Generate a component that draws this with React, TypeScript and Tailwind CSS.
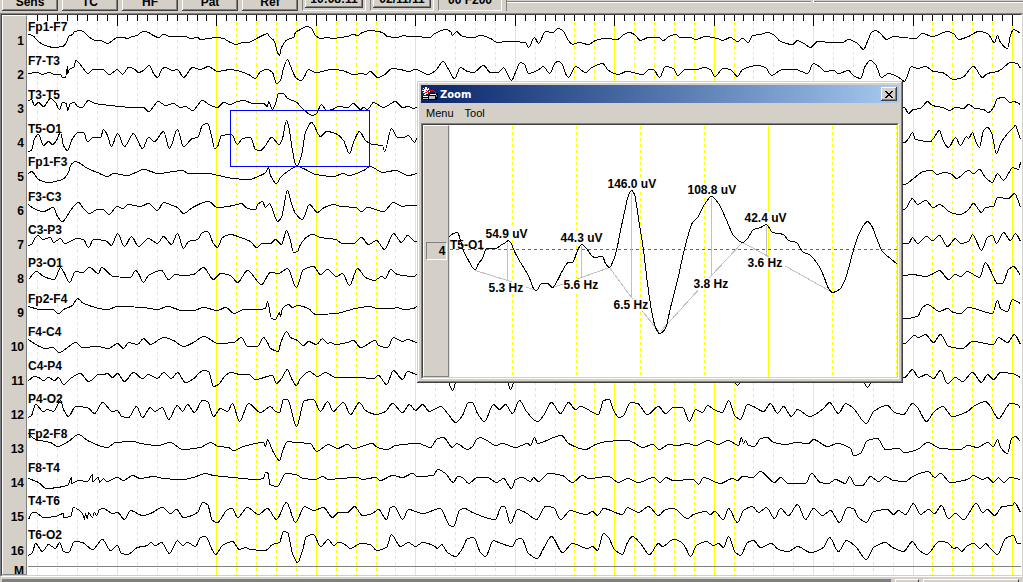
import React from "react";

type Channel = { label: string; y: number; points: string };

const CHANNELS: Channel[] = [
  {
    label: "Fp1-F7",
    y: 31,
    points:
      "28,34 32,35 37,40 42,44 48,46 53,47 62,46 66,42 68,36 72,34 74,31 80,30 84,32 88,36 95,40 100,40 107,43 112,40 117,37 123,37 127,38 132,36 137,35 140,32 144,31 148,32 153,35 158,37 163,34 170,36 185,36 190,38 197,37 200,39 208,38 216,37 223,38 228,41 236,44 242,42 247,42 258,37 262,35 267,33 269,36 274,41 277,52 279,55 281,47 287,39 293,37 295,32 300,29 306,26 310,27 315,35 320,38 327,37 332,38 340,37 347,36 353,34 357,35 362,32 370,30 377,31 382,32 387,36 397,37 403,35 408,36 413,36 430,37 433,34 445,29 450,31 452,35 456,31 462,36 473,37 480,35 490,38 497,42 507,41 525,42 528,47 534,37 538,43 545,31 552,32 558,28 563,31 568,40 572,44 578,42 588,44 595,40 605,38 617,39 623,34 629,32 634,34 640,40 648,37 658,37 663,40 668,36 675,34 680,37 690,37 695,39 705,36 717,38 722,40 730,37 737,41 742,38 748,42 752,35 760,34 767,32 773,34 780,41 792,44 797,40 805,44 810,47 817,41 832,42 842,42 848,39 857,43 863,49 867,41 871,32 875,30 880,33 886,39 893,36 903,37 915,38 922,33 932,36 947,31 953,33 958,39 968,36 978,31 987,33 994,42 997,35 1000,42 1007,48 1010,35 1013,29 1020,33",
  },
  {
    label: "F7-T3",
    y: 65,
    points:
      "28,73 37,72 42,74 48,72 55,74 60,74 62,77 65,77 67,66 67,73 69,69 74,66 75,60 78,62 82,67 86,72 87,73 93,69 102,69 109,74 117,69 122,74 128,67 133,68 138,72 143,70 149,65 153,73 157,77 162,68 165,67 172,70 177,69 183,77 192,67 200,69 208,66 217,71 230,69 240,71 248,74 255,78 260,71 267,69 272,72 276,83 280,80 283,68 287,59 289,63 293,73 296,78 301,80 304,76 308,69 315,72 332,69 342,70 353,74 362,73 365,74 370,71 377,77 383,75 392,68 400,69 408,71 415,69 428,74 435,70 443,61 448,69 454,78 460,67 467,71 473,72 483,65 490,72 498,72 503,67 511,80 515,72 520,62 524,64 528,73 537,70 543,66 549,73 555,62 558,61 562,64 565,73 568,77 575,66 585,72 590,68 602,63 608,70 618,74 626,71 643,74 648,69 653,69 659,77 665,66 673,68 677,75 685,69 697,69 703,67 710,69 714,76 723,68 730,69 737,76 742,69 757,65 765,67 771,75 782,69 795,69 807,73 813,63 820,67 825,71 833,70 838,73 848,70 853,75 860,78 865,65 870,60 875,64 881,77 888,73 900,78 904,81 911,66 917,68 925,66 933,71 942,72 953,79 962,77 973,66 982,77 987,73 997,71 1002,68 1010,62 1017,63 1020,68",
  },
  {
    label: "T3-T5",
    y: 99,
    points:
      "28,100 31,99 34,105 38,102 43,106 50,98 55,102 59,109 62,102 66,103 67,110 70,103 74,102 77,106 82,107 85,103 88,100 95,103 110,105 133,107 143,107 148,111 158,101 165,105 173,103 180,107 185,106 192,110 202,100 210,105 217,107 223,102 230,104 237,101 243,100 253,103 263,103 267,106 268,101 272,109 275,103 278,93 283,93 287,98 295,101 303,109 312,115 316,113 321,104 326,110 332,109 338,106 347,107 353,103 360,109 363,107 367,109 373,102 383,107 395,101 402,107 408,106 413,108 418,106 904,107 908,113 913,109 920,108 927,101 932,105 942,107 949,110 955,107 963,108 968,104 975,108 983,109 988,112 993,107 997,98 1003,97 1010,102 1013,101 1020,104",
  },
  {
    label: "T5-O1",
    y: 133,
    points:
      "28,151 31,150 34,138 38,134 43,145 48,141 52,144 56,140 60,132 63,145 67,150 72,138 78,132 83,132 87,141 93,137 100,137 103,129 107,135 111,146 117,133 124,146 133,133 142,148 148,137 154,141 163,131 169,148 177,129 183,146 192,138 197,137 202,125 207,123 211,135 214,148 217,146 221,135 231,134 237,144 242,138 250,137 255,149 260,150 265,145 271,137 279,144 282,138 286,120 288,125 292,150 295,164 297,165 301,155 305,132 311,122 320,136 326,131 335,133 343,140 349,153 353,142 359,131 365,140 372,144 382,145 384,151 391,128 397,137 403,137 408,135 414,142 418,135 904,142 908,138 912,132 915,139 930,141 933,138 939,130 943,141 948,147 955,137 960,145 966,136 968,138 972,132 975,140 979,147 983,130 987,127 991,132 996,153 1000,143 1007,133 1012,128 1015,125 1018,133 1020,139",
  },
  {
    label: "Fp1-F3",
    y: 166,
    points:
      "28,173 31,171 38,179 47,182 62,179 68,172 70,165 75,161 78,162 87,168 97,172 107,176 113,173 127,175 133,173 143,169 158,173 182,170 188,173 207,173 218,175 233,178 248,179 260,175 265,172 268,167 270,175 276,183 280,177 287,171 297,166 303,168 315,174 333,176 343,173 348,175 363,170 370,166 382,172 395,170 408,175 418,173 904,184 913,178 923,171 931,170 937,174 943,172 950,173 956,178 968,170 973,173 979,169 985,177 992,182 997,173 1003,180 1008,173 1012,167 1018,169 1020,162",
  },
  {
    label: "F3-C3",
    y: 201,
    points:
      "28,204 33,208 43,211 53,207 57,216 62,221 70,210 78,202 83,208 89,213 97,209 103,209 108,214 117,206 122,208 128,204 140,206 148,203 157,210 163,202 172,205 177,207 183,213 192,207 208,201 217,207 233,205 241,203 247,208 255,209 257,204 262,201 265,207 269,203 273,212 277,221 281,217 287,190 291,203 295,213 302,219 309,204 317,212 322,208 333,204 340,206 355,207 361,211 367,207 383,211 393,202 402,206 407,205 417,205 904,209 912,198 917,204 925,200 933,207 939,204 950,212 960,214 968,209 973,203 981,212 985,207 993,206 997,197 1008,198 1014,193 1020,207",
  },
  {
    label: "C3-P3",
    y: 234,
    points:
      "28,245 31,244 35,237 38,235 42,239 50,237 53,242 60,238 64,243 77,238 83,239 88,247 93,239 105,240 111,245 117,233 124,246 131,236 138,246 148,238 157,243 163,236 171,244 177,233 183,248 188,241 197,239 202,232 207,231 213,243 217,247 222,237 230,234 240,237 250,241 256,247 262,243 270,243 275,239 281,244 286,230 290,240 293,252 297,251 300,244 307,236 312,234 320,237 335,239 342,243 353,243 361,237 368,244 376,240 384,249 393,233 401,242 407,235 415,241 904,243 908,243 912,237 917,243 926,236 932,240 939,235 947,246 955,238 960,243 968,241 972,234 977,243 981,250 987,237 992,235 996,243 1003,232 1010,240 1015,233 1020,241",
  },
  {
    label: "P3-O1",
    y: 267,
    points:
      "28,279 36,271 43,276 54,279 60,267 64,273 69,282 75,271 82,272 89,267 98,273 101,267 113,276 130,277 135,270 138,273 143,282 148,275 161,270 168,279 175,274 182,275 193,274 203,267 213,279 220,273 230,275 237,282 247,270 261,284 270,272 278,273 287,268 296,287 303,269 313,266 320,274 327,269 336,276 342,273 349,285 357,268 365,277 374,280 381,276 385,278 390,269 397,274 414,276 417,273 904,275 912,274 925,276 931,274 939,270 948,279 955,274 960,276 967,271 979,277 985,262 990,270 997,283 1002,283 1008,269 1013,266 1020,275",
  },
  {
    label: "Fp2-F4",
    y: 303,
    points:
      "28,306 40,309 52,309 58,313 63,309 72,305 77,298 83,303 107,309 117,306 143,307 157,309 167,306 182,310 193,310 203,307 217,310 225,307 234,313 243,309 257,309 265,308 267,301 271,318 275,319 279,312 280,316 282,308 288,304 292,307 297,305 308,308 315,314 335,313 355,308 369,306 377,308 392,308 397,307 403,309 413,308 417,306 904,318 917,316 922,307 927,304 939,311 947,308 953,312 960,313 968,307 992,313 997,300 1000,308 1007,311 1012,299 1020,303",
  },
  {
    label: "F4-C4",
    y: 336,
    points:
      "28,339 37,345 45,348 52,347 59,352 67,347 75,342 82,347 97,346 108,348 117,343 123,348 128,342 137,344 143,338 150,344 163,337 173,340 183,346 193,342 203,336 218,343 233,342 241,337 247,346 257,346 263,337 267,342 270,348 278,351 280,343 286,331 290,337 297,340 303,345 308,341 316,344 322,338 327,343 330,342 335,344 347,342 353,340 360,347 375,340 378,345 387,347 393,337 402,341 407,339 417,342 904,343 914,335 918,337 925,334 933,342 940,334 948,346 962,348 972,341 993,344 998,337 1007,342 1014,334 1020,344",
  },
  {
    label: "C4-P4",
    y: 370,
    points:
      "28,380 34,376 38,377 43,380 48,377 54,380 58,377 63,384 70,378 80,373 88,381 92,379 98,374 103,374 107,373 112,377 117,373 124,381 133,372 142,378 148,374 157,378 163,372 171,378 177,372 185,382 192,379 203,370 208,371 213,386 218,384 224,376 230,372 240,374 248,374 255,379 272,375 276,383 281,378 287,369 291,378 296,385 300,378 309,371 317,376 325,372 335,377 357,377 373,378 378,375 386,384 393,370 402,379 407,371 417,374 445,374 452,390 458,374 505,374 510,389 516,374 730,374 737,385 743,374 860,374 867,387 875,374 904,377 912,369 918,377 926,374 933,378 940,370 947,383 955,377 962,381 972,372 981,382 987,374 993,379 1000,372 1012,373 1020,377",
  },
  {
    label: "P4-O2",
    y: 403,
    points:
      "28,417 31,415 35,404 43,411 47,409 53,411 60,400 63,409 68,416 75,406 87,407 94,413 102,402 112,411 117,410 121,416 128,417 136,406 142,417 150,407 154,411 162,407 168,419 177,405 182,411 187,404 194,412 202,400 207,401 213,416 220,408 227,411 232,403 239,421 248,403 260,412 270,406 275,411 279,412 283,399 287,399 296,426 304,400 313,399 320,411 327,401 333,411 338,406 343,402 350,414 359,402 365,410 376,414 385,411 392,403 402,412 409,404 415,410 422,404 429,411 440,406 448,414 455,422 462,415 468,402 472,402 477,413 484,421 493,404 499,409 505,404 512,413 519,400 526,411 537,421 543,415 551,402 560,413 568,402 575,409 580,406 598,414 603,400 609,399 613,410 619,417 623,415 630,402 637,403 647,414 658,406 665,413 673,407 682,407 689,421 695,409 702,412 707,405 715,410 722,412 728,400 735,416 740,419 747,404 753,406 763,411 770,403 777,413 783,406 791,416 797,409 809,416 823,408 829,402 838,413 845,403 853,408 866,423 873,411 887,405 894,412 903,414 912,403 917,407 926,421 933,412 942,406 952,416 967,411 973,406 985,401 990,406 998,418 1010,403 1017,404 1020,408",
  },
  {
    label: "Fp2-F8",
    y: 438,
    points:
      "28,433 35,439 50,442 57,446 68,441 78,434 87,440 107,447 115,442 133,441 140,443 157,445 170,442 182,449 200,447 210,442 218,446 228,447 233,450 243,446 263,442 265,446 267,439 272,450 279,460 282,451 287,441 295,442 310,443 316,451 328,444 337,448 347,444 353,448 372,443 377,447 387,449 395,445 418,443 430,447 437,438 443,437 452,447 456,443 467,449 472,446 476,439 480,437 488,441 495,445 502,443 515,447 527,443 530,445 534,437 537,443 553,437 561,435 568,443 585,449 595,444 606,441 627,440 633,442 642,447 652,444 659,449 668,444 677,445 687,443 695,445 708,440 717,444 728,440 738,445 741,437 743,443 745,440 748,445 754,446 760,438 767,437 773,442 786,444 795,442 808,443 813,439 827,446 837,443 850,448 853,455 860,453 867,440 877,438 885,449 898,448 904,452 917,449 927,442 940,448 960,449 967,445 977,447 987,442 993,446 997,439 1000,447 1007,453 1011,438 1015,436 1020,441",
  },
  {
    label: "F8-T4",
    y: 472,
    points:
      "28,478 38,482 46,488 67,485 71,477 71,483 78,480 87,481 92,474 92,481 98,477 99,482 103,478 106,481 117,477 123,480 132,475 140,478 153,476 163,478 182,479 193,477 205,473 213,475 233,477 257,479 263,478 265,472 268,473 269,484 277,486 285,473 295,474 303,478 315,479 322,476 328,479 340,478 357,477 362,479 375,477 380,480 392,475 402,477 412,473 417,476 433,475 437,469 445,473 453,482 457,476 462,477 468,483 477,477 487,477 496,482 503,478 511,488 515,479 522,477 530,481 533,477 538,481 548,473 562,475 572,482 582,475 588,478 608,476 618,482 627,478 638,482 653,477 660,482 665,477 673,480 693,479 698,484 703,477 720,483 732,478 737,480 742,476 752,477 760,471 774,482 780,477 788,483 805,483 811,473 820,482 828,483 835,479 845,483 849,476 855,485 862,485 870,476 878,481 885,476 893,480 905,481 912,476 928,471 934,477 940,473 950,482 967,479 973,475 982,479 987,477 993,482 998,477 1003,482 1010,477 1020,479",
  },
  {
    label: "T4-T6",
    y: 505,
    points:
      "28,519 32,512 35,512 43,517 55,516 63,513 63,517 70,516 73,507 82,513 84,519 85,513 87,518 88,512 92,517 94,512 96,515 99,509 103,508 112,513 117,512 124,519 130,510 142,515 150,513 162,507 170,513 176,509 183,517 197,512 202,502 207,504 212,520 217,522 227,509 232,508 237,517 247,507 258,514 267,508 276,519 286,502 295,522 304,506 313,510 323,507 332,517 338,512 347,512 354,506 362,515 372,513 378,509 386,519 390,507 394,506 402,519 408,509 422,513 440,508 445,517 449,525 453,526 459,510 464,508 472,512 495,519 501,506 504,506 510,523 517,509 525,512 536,519 545,506 553,507 560,519 570,510 577,512 586,514 592,511 597,515 603,508 622,514 627,507 638,512 648,506 658,515 665,509 673,508 687,518 693,514 705,511 710,514 714,511 723,519 728,508 737,522 743,510 752,506 758,512 766,507 774,518 780,508 788,515 797,504 805,519 813,508 822,515 830,510 839,522 847,507 853,508 858,517 866,522 873,511 887,509 893,514 898,510 905,514 913,503 920,514 928,509 934,513 941,505 948,518 955,513 963,519 976,503 982,512 987,509 994,515 1002,506 1012,505 1014,502 1020,512",
  },
  {
    label: "T6-O2",
    y: 539,
    points:
      "28,555 32,552 35,543 42,551 48,544 55,548 59,542 63,551 68,552 74,541 82,542 92,549 102,539 110,550 117,545 121,553 127,554 137,547 147,545 150,542 155,545 161,542 169,553 177,540 182,545 187,542 195,546 200,537 205,536 212,550 215,554 222,545 232,541 239,549 245,547 250,549 265,550 272,544 279,542 283,531 287,532 292,553 297,562 302,550 306,536 313,534 320,546 328,539 333,545 338,542 343,543 350,548 360,543 370,544 376,550 386,547 391,534 393,536 400,546 408,542 415,546 422,542 433,545 437,548 441,544 447,552 455,556 462,548 467,538 473,537 480,552 485,556 493,540 498,542 512,546 516,539 521,538 528,553 537,558 543,548 551,536 562,552 572,543 587,548 592,546 597,550 603,533 608,537 614,549 622,554 627,542 632,536 640,543 649,554 658,543 662,546 673,539 680,541 685,547 690,556 696,545 706,541 713,545 718,543 723,547 728,536 735,552 740,555 747,542 753,540 760,547 771,543 778,549 788,551 797,546 810,552 823,547 829,537 838,551 846,540 855,546 866,559 873,547 885,542 892,547 903,551 912,541 917,548 926,554 939,541 947,542 953,548 957,547 961,551 967,545 973,543 980,548 985,543 990,548 997,554 1005,538 1013,535 1017,543 1020,543",
  },
];

const ZOOM_TRACE =
  "449,236 453,233 457,232 460,240 463,250 468,260 473,268 475,269 478,263 482,258 486,248 490,248 495,248 500,245 505,242 508,240 510,242 515,253 520,262 525,270 530,280 533,288 536,290 541,283 547,283 552,287 557,280 562,270 568,262 572,262 577,250 581,244 585,247 594,257 602,256 605,263 609,267 612,262 616,250 620,230 625,207 627,198 631,190 634,194 638,218 643,250 647,283 651,310 655,327 659,333 665,328 670,307 677,280 682,257 687,237 692,222 697,217 704,204 711,196 718,203 727,222 733,235 742,242 747,238 753,229 760,227 766,224 772,232 783,234 788,240 796,242 802,251 810,255 818,265 823,275 828,288 832,292 839,289 845,278 852,253 857,237 863,225 867,221 871,225 877,240 882,251 890,258 897,264";

const ZOOM_LABELS = [
  { x: 484, y: 237, w: 45, text: "54.9 uV" },
  { x: 559, y: 241, w: 45, text: "44.3 uV" },
  { x: 606, y: 187, w: 52, text: "146.0 uV" },
  { x: 686, y: 193, w: 52, text: "108.8 uV" },
  { x: 743, y: 221, w: 45, text: "42.4 uV" },
  { x: 487, y: 291, w: 38, text: "5.3 Hz" },
  { x: 562, y: 288, w: 38, text: "5.6 Hz" },
  { x: 612, y: 308, w: 38, text: "6.5 Hz" },
  { x: 692, y: 287, w: 38, text: "3.8 Hz" },
  { x: 746, y: 266, w: 38, text: "3.6 Hz" },
];

// one tick every 0.1 s, counted back from the right-hand second mark
const TICKS = Array.from({ length: 99 }, (_, k) => ({
  k,
  x: Math.round(1012 - k * 9.945),
}));

const RAISED =
  "bg-[#d4d0c8] shadow-[inset_-1px_-1px_#404040,inset_1px_1px_#fff,inset_-2px_-2px_#808080]";

// monotone cubic through the samples: peaks stay where they are but get rounded
function smooth(points: string) {
  const p = points.split(" ").map((s) => s.split(",").map(Number));
  const n = p.length;
  const slope = (i: number) => {
    const dx = p[i + 1][0] - p[i][0];
    return dx ? (p[i + 1][1] - p[i][1]) / dx : 0;
  };
  const m = p.map((_, i) => {
    if (i === 0) return slope(0);
    if (i === n - 1) return slope(n - 2);
    const a = slope(i - 1);
    const b = slope(i);
    return a * b <= 0 ? 0 : (2 * a * b) / (a + b);
  });
  let d = `M${p[0][0]} ${p[0][1]}`;
  for (let i = 0; i < n - 1; i++) {
    const [x0, y0] = p[i];
    const [x1, y1] = p[i + 1];
    const h = (x1 - x0) / 3;
    d += `C${x0 + h} ${y0 + m[i] * h} ${x1 - h} ${y1 - m[i + 1] * h} ${x1} ${y1}`;
  }
  return d;
}

function ToolButton({ label }: { label: string }) {
  return (
    <button
      type="button"
      className={`h-[18px] w-14 shrink-0 text-center leading-3 font-bold ${RAISED}`}
    >
      {label}
    </button>
  );
}

function TimeButton({ label }: { label: string }) {
  return (
    <div className="h-6 w-16 shrink-0 border border-[#808080] border-r-white border-b-white p-0.5">
      <button
        type="button"
        className={`h-[18px] w-full text-center leading-3 font-bold ${RAISED}`}
      >
        {label}
      </button>
    </div>
  );
}

function Toolbar() {
  return (
    <header className="flex h-[13px] shrink-0 items-end gap-1 overflow-hidden bg-[#d4d0c8] pb-0.5 pl-0.5">
      <ToolButton label="Sens" />
      <ToolButton label="TC" />
      <ToolButton label="HF" />
      <ToolButton label="Pat" />
      <ToolButton label="Ref" />
      <TimeButton label="10:08:11" />
      <TimeButton label="02/11/11" />
      <div className="h-6 w-16 shrink-0 border border-[#808080] border-r-white border-b-white pt-1.5 text-center leading-3 font-bold">
        00 F200
      </div>
      <div className="flex h-[11px] flex-1 items-start gap-0.5 border-l border-[#808080]">
        <div className="h-[3px] w-[304px] border-b border-white shadow-[inset_0_-1px_#808080]" />
        <div className="h-[3px] flex-1 border-b border-l border-white shadow-[inset_0_-1px_#808080]" />
      </div>
    </header>
  );
}

function ChannelGutter() {
  return (
    <ul className="w-[25px] shrink-0 overflow-hidden border border-white border-r-[#808080] border-b-[#808080] bg-[#d4d0c8] pt-2 pr-0.5 text-right font-bold">
      {CHANNELS.map((c, i) => (
        <li key={c.label} className="h-[34px] leading-[34px]">
          {i + 1}
        </li>
      ))}
      <li className="h-1.5 leading-1.5">M</li>
    </ul>
  );
}

function Montage() {
  return (
    <svg className="block h-full w-full" shapeRendering="crispEdges">
      <g transform="translate(-26.5 -14.5)" fill="none">
        {TICKS.map(({ k, x }) => (
          <g key={k}>
            {k % 10 === 0 ? (
              <path d={`M${x} 24V575`} stroke="#ffff00" />
            ) : (
              k % 2 === 0 && (
                <path
                  d={`M${x} 21V575`}
                  stroke="#ffff00"
                  strokeDasharray="3 3"
                />
              )
            )}
            <path d={`M${x} 14V${k % 10 === 0 ? 25 : 20}`} stroke="#000" />
          </g>
        ))}
        <path d="M27 566H1021" stroke="#808080" />
        {CHANNELS.map((c) => (
          <g key={c.label}>
            <path d={smooth(c.points)} stroke="#000" />
            <text x="27.5" y={c.y - 1} fill="#000" className="font-bold">
              {c.label}
            </text>
          </g>
        ))}
        <rect x="230" y="110" width="139" height="56" stroke="#0000ff" />
      </g>
    </svg>
  );
}

function ZoomPlot() {
  return (
    <svg className="block h-full w-full" shapeRendering="crispEdges">
      <g transform="translate(-448.5 -124.5)" fill="none">
        <path d="M449 125V378M768 125V378" stroke="#ffff00" />
        <path
          d="M512 125V378M576 125V378M640 125V378M704 125V378M832 125V378M896 125V378"
          stroke="#ffff00"
          strokeDasharray="3 3"
        />
        <path d="M449 249H897" stroke="#00b000" strokeDasharray="3 3" />
        <path
          d="M475 270L507 280L536 290M507 242V280M552 287L581 277L609 267M581 245V277M609 267L631 297L659 332M631 192V297M660 331L711 275L742 242M711 197V275M742 242L766 255L832 292M766 225V255"
          stroke="#c0c0c0"
        />
        {ZOOM_LABELS.map((l) => (
          <g key={l.text}>
            <rect x={l.x} y={l.y - 10} width={l.w} height="12" fill="#fff" />
            <text x={l.x + 1} y={l.y} fill="#000" className="font-bold">
              {l.text}
            </text>
          </g>
        ))}
        <text x="449.5" y="248" fill="#000" className="font-bold">
          T5-O1
        </text>
        <path d={smooth(ZOOM_TRACE)} stroke="#000" />
      </g>
    </svg>
  );
}

function AppIcon() {
  return (
    <svg
      className="shrink-0"
      width="16"
      height="14"
      viewBox="0 0 16 14"
      shapeRendering="crispEdges"
    >
      <path d="M0 9H7V13H1L0 12Z" fill="#000" />
      <path d="M1 9H6V10H1Z" fill="#fff" />
      <path d="M1 11H6V12H1Z" fill="#c0c0c0" />
      <path d="M6 8L8 6H15L16 7V11L14 13H6Z" fill="#000" />
      <path d="M8 7H14V8H8Z" fill="#fff" />
      <path d="M7 9H13V12H7Z" fill="#c0c0c0" />
      <path d="M14 8H15V10H14Z" fill="#808080" />
      <path
        d="M1 1H2V2H3V0H5V2H6V1H7V3H6V4H8V5H6V7H4V8H2V7H3V6H1V5H2V4H0V3H2V2H1Z"
        fill="#fff"
      />
      <path
        d="M4 3H5V4H4ZM3 5H5V6H3ZM5 4H7V5H5ZM7 3H10V4H7ZM10 3H12V4H10ZM12 4H13V5H12ZM13 5H14V7H13ZM6 5H8V6H6Z"
        fill="#ff0000"
      />
    </svg>
  );
}

function ZoomWindow() {
  return (
    <section
      aria-label="Zoom"
      className="absolute top-[81px] left-[417px] flex h-[302px] w-[486px] flex-col bg-[#d4d0c8] p-1 shadow-[inset_-1px_-1px_#404040,inset_1px_1px_#d4d0c8,inset_-2px_-2px_#808080,inset_2px_2px_#fff]"
    >
      <div className="flex h-[18px] shrink-0 items-center gap-0.5 bg-linear-to-r from-[#0a246a] to-[#a6caf0] pr-0.5 pl-px">
        <AppIcon />
        <h1 className="flex-1 font-['DejaVu_Sans',sans-serif] text-[10px] font-bold text-white">
          Zoom
        </h1>
        <button
          type="button"
          aria-label="Close"
          className={`flex h-3.5 w-4 items-center justify-center ${RAISED}`}
        >
          <svg width="8" height="7" viewBox="0 0 8 7" shapeRendering="crispEdges">
            <path
              d="M0 0H2V1H3V2H5V1H6V0H8V1H7V2H6V3H5V4H6V5H7V6H8V7H6V6H5V5H3V6H2V7H0V6H1V5H2V4H3V3H2V2H1V1H0Z"
              fill="#000"
            />
          </svg>
        </button>
      </div>
      <nav className="flex h-5 shrink-0 items-center gap-[11px] px-[5px] text-[11px]">
        <button type="button">Menu</button>
        <button type="button">Tool</button>
      </nav>
      <div className="flex min-h-0 flex-1 border border-[#808080] border-r-white border-b-white bg-white">
        <div className="flex min-w-0 flex-1 border border-[#404040] border-r-[#d4d0c8] border-b-[#d4d0c8]">
          <div className="flex w-[26px] shrink-0 items-center justify-center border border-white border-r-[#808080] border-b-[#808080] bg-[#d4d0c8]">
            <span className="h-[18px] w-[21px] border border-[#808080] border-r-white border-b-white text-right leading-4 font-bold">
              4
            </span>
          </div>
          <div className="min-w-0 flex-1">
            <ZoomPlot />
          </div>
        </div>
      </div>
    </section>
  );
}

function StatusBar() {
  return (
    <footer className="flex h-[5px] shrink-0 gap-1 overflow-hidden bg-[#d4d0c8] pt-0.5 pr-1 pl-0.5">
      <div className="flex-1 bg-[#808080]" />
      <div className="h-4 w-6 border border-white border-r-[#404040]" />
      <div className="h-4 w-24 border border-white border-r-[#404040]" />
    </footer>
  );
}

export default function App() {
  return (
    <div className="relative flex h-screen flex-col overflow-hidden bg-white font-['Liberation_Sans',Arial,sans-serif] text-[12px] text-black">
      <Toolbar />
      <main className="flex min-h-0 flex-1 border border-[#808080] border-r-[#d4d0c8] border-b-white">
        <div className="flex min-w-0 flex-1 border border-[#404040] border-r-white border-b-[#d4d0c8]">
          <ChannelGutter />
          <div className="min-w-0 flex-1">
            <Montage />
          </div>
        </div>
      </main>
      <StatusBar />
      <ZoomWindow />
    </div>
  );
}
